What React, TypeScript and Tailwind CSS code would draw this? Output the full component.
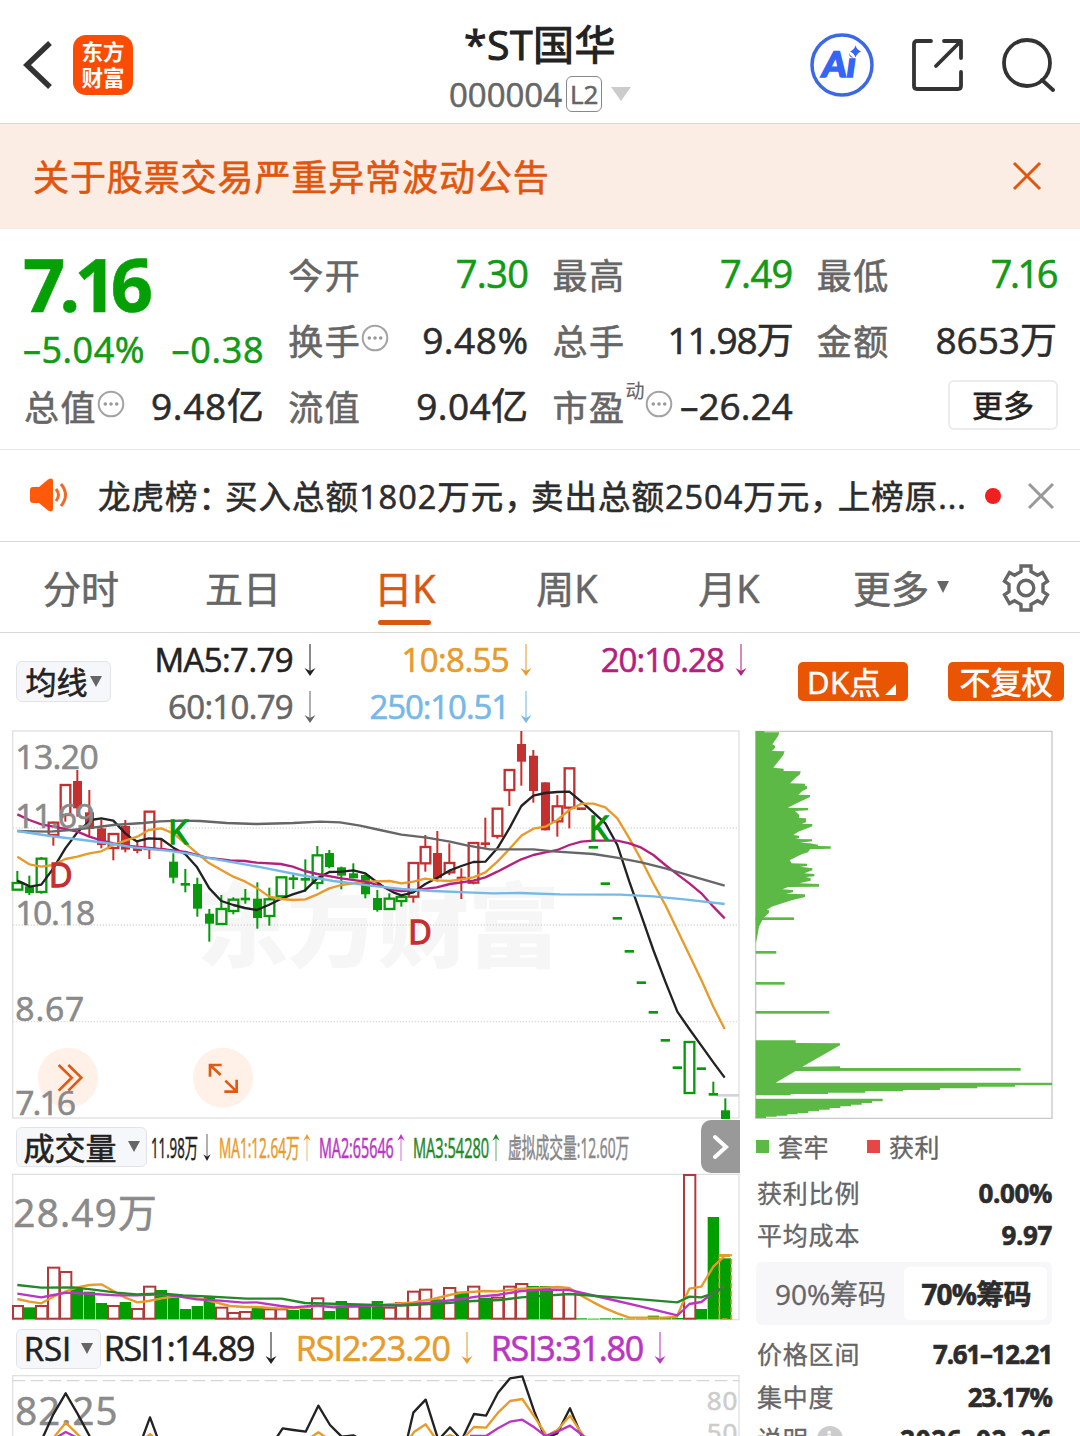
import React from "react";

type Pt = [number, number];
type Kind = "solid" | "hollow" | "dash";
type Candle = ["r" | "g", Kind, number, number, number, number];

const RED = "#c4302f";
const GREEN = "#079a0b";

// color, kind, body top, body bottom, wick top, wick bottom
const candles: Candle[] = [
  ["g", "hollow", 474, 494, 438, 474], ["g", "solid", 484, 504, 452, 510], ["g", "hollow", 401, 501, 396, 506],
  ["r", "hollow", 293, 330, 290, 362], ["r", "hollow", 180, 270, 180, 290], ["r", "solid", 168, 250, 135, 275],
  ["r", "solid", 262, 312, 195, 335], ["r", "solid", 310, 360, 285, 370], ["r", "hollow", 327, 369, 327, 406],
  ["r", "solid", 303, 374, 285, 382], ["r", "solid", 366, 378, 350, 385], ["r", "hollow", 260, 372, 260, 402],
  ["r", "solid", 370, 378, 345, 378], ["g", "solid", 410, 458, 385, 475], ["g", "dash", 478, 0, 432, 502],
  ["g", "solid", 477, 551, 458, 575], ["g", "solid", 566, 596, 552, 650], ["g", "hollow", 552, 597, 510, 597],
  ["g", "hollow", 524, 558, 517, 568], ["g", "dash", 522, 0, 492, 536], ["g", "solid", 521, 579, 472, 611],
  ["g", "hollow", 523, 573, 488, 602], ["g", "hollow", 457, 514, 457, 457], ["g", "dash", 461, 0, 448, 492],
  ["g", "dash", 463, 0, 403, 500], ["g", "hollow", 391, 474, 363, 493], ["g", "solid", 384, 426, 375, 430],
  ["g", "solid", 427, 452, 425, 493], ["g", "solid", 445, 460, 415, 460], ["g", "solid", 450, 508, 448, 520],
  ["g", "solid", 519, 555, 495, 560], ["g", "hollow", 521, 552, 505, 552], ["g", "hollow", 516, 528, 510, 545],
  ["r", "hollow", 414, 515, 414, 533], ["r", "hollow", 366, 415, 330, 440], ["r", "solid", 384, 460, 318, 470],
  ["r", "hollow", 414, 442, 355, 450], ["r", "dash", 459, 0, 430, 522], ["r", "hollow", 354, 473, 354, 478],
  ["r", "dash", 356, 0, 278, 368], ["r", "hollow", 251, 333, 251, 341], ["r", "hollow", 135, 195, 135, 243],
  ["r", "solid", 57, 110, 18, 182], ["r", "solid", 92, 198, 75, 233], ["r", "solid", 172, 316, 172, 316],
  ["r", "hollow", 244, 289, 210, 335], ["r", "hollow", 130, 248, 130, 310], ["r", "dash", 251, 0, 251, 251],
  ["g", "dash", 367, 0, 367, 367], ["g", "dash", 476, 0, 476, 476], ["g", "dash", 580, 0, 580, 580],
  ["g", "dash", 679, 0, 679, 679], ["g", "dash", 773, 0, 773, 773], ["g", "dash", 862, 0, 862, 862],
  ["g", "dash", 946, 0, 946, 946], ["g", "dash", 1028, 0, 1028, 1028], ["g", "hollow", 951, 1104, 951, 951],
  ["g", "dash", 1031, 0, 1031, 1031], ["g", "dash", 1108, 0, 1070, 1108], ["g", "solid", 1156, 1182, 1120, 1182],
];

const ma5 = "52,467 72,476 90,485 124,479 160,430 196,370 232,322 272,285 304,280 340,287 376,325 395,340 410,349 446,340 484,342 520,368 556,388 590,425 628,490 664,528 700,540 735,549 770,555 806,540 842,522 878,508 914,497 952,460 988,441 1024,440 1060,436 1096,445 1122,465 1150,485 1180,502 1204,511 1240,502 1276,477 1312,458 1348,437 1384,423 1420,411 1456,410 1492,370 1528,310 1564,243 1600,212 1636,204 1672,201 1708,200 1744,230 1780,262 1816,295 1852,360 1888,470 1924,572 1960,675 1996,770 2032,860 2068,912 2104,962 2140,1012 2174,1058";
const ma10 = "52,395 88,418 124,425 160,420 196,402 232,395 268,385 304,379 340,360 376,347 412,335 446,315 484,310 520,325 556,355 592,385 628,415 664,435 700,455 736,470 772,490 808,515 844,522 880,525 916,523 952,508 988,490 1024,480 1060,475 1096,470 1170,468 1204,475 1240,470 1276,461 1312,466 1348,468 1384,463 1420,457 1456,442 1492,410 1528,372 1564,332 1600,311 1636,305 1672,285 1708,255 1744,236 1780,236 1816,247 1852,280 1888,340 1924,405 1960,475 1996,540 2032,615 2068,690 2104,765 2140,845 2174,912";
const ma20 = "52,268 88,285 124,298 160,305 196,312 232,320 268,335 304,346 340,355 376,362 440,368 500,374 556,381 620,398 690,406 735,408 770,413 842,417 878,425 914,438 952,447 1024,460 1096,470 1140,482 1180,495 1204,498 1240,496 1310,487 1350,477 1420,467 1456,457 1492,440 1564,403 1600,390 1636,382 1672,375 1708,360 1744,350 1780,347 1852,347 1888,355 1924,368 1960,390 1996,420 2032,448 2068,475 2104,505 2140,545 2174,580";
const ma60 = "52,318 100,319 150,320 200,316 260,310 340,300 430,294 480,289 540,287 600,288 680,294 770,297 880,294 960,290 1020,292 1080,302 1140,315 1204,329 1280,338 1350,350 1400,361 1470,373 1600,373 1660,379 1780,387 1850,398 1924,412 1996,430 2080,455 2174,482";
const ma250 = "52,318 150,333 250,345 340,357 400,367 500,377 560,385 620,398 700,412 800,430 900,450 1000,468 1060,475 1110,482 1204,492 1300,498 1400,502 1480,505 1560,504 1680,508 1860,509 1960,514 2060,524 2174,537";

// color and bar top, one entry a trading day
const volumes: ["r" | "g", number][] = [
  ["r", 573], ["g", 577], ["r", 573], ["r", 458], ["r", 471], ["g", 520], ["g", 530], ["g", 564], ["r", 573], ["g", 561],
  ["r", 582], ["r", 515], ["g", 525], ["g", 548], ["g", 582], ["g", 573], ["g", 543], ["r", 578], ["r", 594], ["r", 591],
  ["g", 575], ["r", 583], ["r", 583], ["g", 585], ["g", 582], ["r", 550], ["g", 588], ["g", 558], ["r", 575], ["g", 575],
  ["g", 558], ["r", 578], ["r", 564], ["r", 530], ["r", 524], ["g", 553], ["r", 519], ["g", 530], ["r", 515], ["g", 548],
  ["r", 548], ["r", 515], ["r", 507], ["g", 513], ["g", 513], ["r", 525], ["r", 537], ["g", 610], ["g", 611], ["g", 610],
  ["g", 610], ["g", 611], ["g", 611], ["g", 602], ["g", 608], ["g", 609], ["r", 180], ["g", 582], ["g", 306], ["g", 430],
];

const vma1 = "52,552 88,560 124,565 160,545 200,528 232,517 268,510 304,508 340,528 376,548 412,562 446,558 484,550 520,545 560,545 620,555 690,573 735,576 770,576 842,581 914,578 952,573 1024,574 1110,572 1240,562 1300,552 1348,540 1384,533 1456,528 1492,529 1564,521 1636,518 1672,516 1708,519 1744,542 1780,562 1816,580 1852,595 1888,608 1990,608 2030,606 2050,560 2068,521 2104,515 2140,455 2174,423 2190,421";
const vma2 = "52,536 124,547 160,540 200,533 280,537 350,541 410,541 484,538 540,545 590,553 660,557 730,563 770,562 842,573 880,577 950,571 1000,577 1060,573 1204,570 1300,562 1384,552 1430,545 1492,540 1564,528 1636,524 1708,525 1852,558 1924,575 2032,601 2050,585 2068,567 2104,561 2140,533 2174,515";
const vma3 = "52,510 124,518 220,517 280,524 350,533 410,538 484,535 550,541 620,544 740,551 845,551 915,564 1024,567 1204,572 1330,565 1420,558 1500,555 1564,547 1708,537 1888,550 1960,556 2032,562 2068,545 2104,547 2140,535 2174,517";

const chipProfile: Pt[] = [
  [32, 18], [58, 18], [58, 22], [103, 22], [100, 32], [82, 58], [90, 62], [90, 68], [81, 78], [119, 79], [115, 90], [85, 128],
  [116, 131], [116, 138], [167, 139], [165, 148], [150, 160], [135, 175], [180, 176], [180, 183], [186, 184], [186, 191], [172, 198],
  [160, 209], [195, 210], [195, 216], [155, 235], [128, 248], [189, 249], [189, 256], [150, 258], [163, 270], [163, 279], [183, 280],
  [183, 292], [170, 296], [202, 297], [202, 304], [160, 320], [145, 330], [162, 332], [162, 340], [150, 342], [201, 343], [201, 349],
  [165, 353], [195, 355], [219, 359], [219, 363], [257, 364], [257, 371], [195, 373], [189, 382], [170, 388], [134, 406], [140, 415],
  [186, 416], [186, 423], [165, 425], [190, 428], [202, 430], [202, 436], [178, 445], [208, 447], [208, 454], [183, 456], [197, 460],
  [197, 467], [163, 475], [222, 477], [222, 485], [130, 486], [112, 493], [144, 495], [144, 502], [123, 506], [180, 508], [180, 516],
  [140, 526], [112, 535], [80, 545], [65, 555], [72, 556], [72, 563], [55, 580], [42, 605], [36, 640], [32, 655],
];
const chipLower: Pt[] = [
  [32, 946], [152, 946], [152, 954], [285, 955], [285, 961], [172, 1025], [285, 1024], [285, 1029], [827, 1029], [827, 1037],
  [152, 1038], [92, 1073], [921, 1073], [921, 1081], [810, 1081], [810, 1085], [697, 1085], [697, 1090], [585, 1090], [585, 1095],
  [474, 1095], [474, 1099], [361, 1099], [361, 1103], [249, 1103], [249, 1107], [137, 1107], [137, 1111], [32, 1111],
];
const chipBase: Pt[] = [
  [32, 1121], [413, 1121], [413, 1129], [381, 1129], [381, 1134], [350, 1134], [350, 1139], [318, 1139], [318, 1144], [286, 1144],
  [286, 1149], [254, 1149], [254, 1154], [222, 1154], [222, 1159], [190, 1159], [190, 1164], [158, 1164], [158, 1168], [127, 1168],
  [127, 1172], [95, 1172], [95, 1175], [63, 1175], [63, 1179], [32, 1179],
];
const chipSpikes = [[577, 147], [678, 94], [771, 119], [858, 253]];

const toPoints = (pts: Pt[]) => pts.map((p) => p.join(",")).join(" ");

function Line({ points, color, w = 7 }: { points: string; color: string; w?: number }) {
  return <polyline points={points} fill="none" stroke={color} strokeWidth={w} strokeLinejoin="round" />;
}

function AxisText({ x, y, w, size, children, fill = "#8a8a8a" }: { x: number; y: number; w: number; size: number; children: string; fill?: string }) {
  return (
    <text x={x} y={y} textLength={w} fontSize={size} fill={fill} stroke={fill} strokeWidth={2} lengthAdjust="spacing">
      {children}
    </text>
  );
}

function CandleMark({ c, i }: { c: Candle; i: number }) {
  const [tone, kind, top, bottom, wTop, wBottom] = c;
  const x = 52 + 36 * i;
  const color = tone === "r" ? RED : GREEN;
  if (kind === "dash")
    return (
      <g fill={color}>
        <rect x={x - 14} y={top - 4} width={28} height={8} />
        {wBottom > wTop && <rect x={x - 3} y={wTop} width={6} height={wBottom - wTop} />}
      </g>
    );
  if (kind === "solid")
    return (
      <g fill={color}>
        <rect x={x - 13} y={top} width={27} height={bottom - top} />
        <rect x={x - 3} y={wTop} width={6} height={wBottom - wTop} />
      </g>
    );
  return (
    <g fill={color}>
      <rect x={x - 14} y={top} width={29} height={bottom - top} fill="none" stroke={color} strokeWidth={7} />
      {top > wTop && <rect x={x - 3} y={wTop} width={6} height={top - wTop} />}
      {wBottom > bottom && <rect x={x - 3} y={bottom} width={6} height={wBottom - bottom} />}
    </g>
  );
}

function Signal({ x, y, color, children }: { x: number; y: number; color: string; children: string }) {
  return <text x={x} y={y} fontSize={97} fill={color} stroke={color} strokeWidth={4}>{children}</text>;
}

function PriceChart() {
  return (
    <svg viewBox="0 15 2220 1170" className="block h-[390px] w-[740px]">
      <text x={590} y={706} fontSize={276} textLength={1090} fill="#f6f6f6" className="font-black">东方财富</text>
      {[309, 600, 890].map((y) => (
        <line key={y} x1={38} x2={2216} y1={y} y2={y} stroke="#dcdcdc" strokeWidth={4} strokeDasharray="4 5" />
      ))}
      <rect x={38} y={18} width={2179} height={1161} fill="none" stroke="#e0e0e0" strokeWidth={4} />
      <line x1={2150} x2={2217} y1={1111} y2={1111} stroke="#d3d4da" strokeWidth={8} />
      <circle cx={204} cy={1058} r={90} fill="#fff0e8" />
      <circle cx={669} cy={1058} r={90} fill="#fff0e8" />
      <g fill="none" stroke="#e05a14" strokeWidth={8}>
        <path d="M176 1020l39 38-39 39M205 1020l39 38-39 39" />
        <path d="M630 1055v-35h35M630 1020l32 30M710 1064v36h-37M710 1100l-34-33" />
      </g>
      {candles.map((c, i) => <CandleMark key={i} c={c} i={i} />)}
      <Line points={ma5} color="#222" />
      <Line points={ma10} color="#e79b2a" />
      <Line points={ma20} color="#b4207e" />
      <Line points={ma60} color="#666" />
      <Line points={ma250} color="#76b8e6" />
      <AxisText x={46} y={131} w={250} size={101}>13.20</AxisText>
      <AxisText x={46} y={308} w={238} size={101}>11.69</AxisText>
      <AxisText x={46} y={600} w={240} size={101}>10.18</AxisText>
      <AxisText x={46} y={889} w={207} size={101}>8.67</AxisText>
      <AxisText x={46} y={1169} w={182} size={101}>7.16</AxisText>
      <Signal x={505} y={356} color={GREEN}>K</Signal>
      <Signal x={147} y={486} color={RED}>D</Signal>
      <Signal x={1225} y={656} color={RED}>D</Signal>
      <Signal x={1766} y={346} color={GREEN}>K</Signal>
    </svg>
  );
}

function VolumeChart() {
  return (
    <svg viewBox="0 174 2220 444" className="block h-[148px] w-[740px]">
      <rect x={38} y={178} width={2179} height={436} fill="none" stroke="#e0e0e0" strokeWidth={4} />
      {volumes.map(([tone, top], i) => {
        const x = 52 + 36 * i;
        return tone === "r" ? (
          <rect key={i} x={i ? x - 16 : 39} y={top} width={i ? 34 : 30} height={611 - top} fill="#fff" stroke="#b03a3a" strokeWidth={6} />
        ) : (
          <rect key={i} x={x - 17} y={top} width={34} height={613 - top} fill="#009f00" />
        );
      })}
      <rect x={2158} y={420} width={36} height={192} fill="none" stroke="#e79b2a" strokeWidth={5} strokeDasharray="16 8" />
      <rect x={2156} y={417} width={34} height={9} fill="#e79b2a" />
      <Line points={vma1} color="#e79b2a" />
      <Line points={vma2} color="#bb35c4" />
      <Line points={vma3} color="#24882a" />
      <AxisText x={40} y={335} w={430} size={116}>28.49万</AxisText>
    </svg>
  );
}

function RsiChart() {
  return (
    <svg viewBox="0 777 2220 186" className="block h-[62px] w-[740px]">
      <rect x={38} y={782} width={2179} height={300} fill="none" stroke="#e0e0e0" strokeWidth={4} />
      <line x1={38} x2={2216} y1={797} y2={797} stroke="#ccc" strokeWidth={3} strokeDasharray="38 16" />
      <AxisText x={46} y={929} w={306} size={115}>82.25</AxisText>
      <AxisText x={2120} y={884} w={92} size={78} fill="#ccc">80</AxisText>
      <AxisText x={2120} y={981} w={92} size={78} fill="#ccc">50</AxisText>
      <Line points="125,975 160,898 197,835 232,895 275,975" color="#222" />
      <Line points="425,975 450,907 475,975" color="#222" />
      <Line points="825,975 848,940 880,945 917,950 955,872 990,930 1025,965 1060,961 1085,975" color="#222" />
      <Line points="1222,970 1240,893 1277,854 1315,975 1350,937 1385,975 1422,897 1458,902 1494,833 1530,790 1567,784 1603,890 1636,970 1672,955 1710,880 1750,975" color="#222" />
      <Line points="155,975 197,923 240,965" color="#e79b2a" />
      <Line points="430,975 450,957 470,975" color="#e79b2a" />
      <Line points="925,972 955,952 985,972" color="#e79b2a" />
      <Line points="1225,975 1243,950 1277,928 1310,975 1350,960 1385,975 1422,936 1458,938 1494,893 1530,858 1567,852 1603,905 1640,962 1672,945 1710,902 1755,970" color="#e79b2a" />
      <Line points="165,970 197,951 235,970" color="#bb35c4" />
      <Line points="1410,963 1458,963 1494,940 1530,920 1567,914 1600,935 1636,963 1672,950 1710,932 1757,968" color="#bb35c4" />
    </svg>
  );
}

function ChipChart() {
  return (
    <svg viewBox="30 15 900 1170" className="block h-[390px] w-[300px]">
      <path d="M32 1180V19H921V1180Z" fill="none" stroke="#c8c8c8" strokeWidth={4} />
      <g fill="#5cb946">
        <polygon points={toPoints(chipProfile)} />
        <polygon points={toPoints(chipLower)} />
        <polygon points={toPoints(chipBase)} />
        {chipSpikes.map(([y, x]) => <rect key={y} x={32} y={y} width={x - 32} height={8} />)}
      </g>
    </svg>
  );
}

function Dots() {
  return (
    <svg viewBox="0 0 28 28" className="-mt-[6px] h-7 w-7 shrink-0">
      <circle cx="14" cy="14" r="12.3" fill="none" stroke="#a3a3a3" strokeWidth="2" />
      <g fill="#999"><circle cx="8.3" cy="14" r="1.800" /><circle cx="14" cy="14" r="1.800" /><circle cx="19.7" cy="14" r="1.800" /></g>
    </svg>
  );
}

function Arrow({ color, up = false, h = 32, w = 12 }: { color: string; up?: boolean; h?: number; w?: number }) {
  return (
    <svg viewBox="0 0 12 32" width={w} height={h} className={up ? "shrink-0 rotate-180" : "shrink-0"} preserveAspectRatio="none">
      <path d="M6 0V29" stroke={color} strokeWidth="1.4" opacity=".75" />
      <path d="M.5 24L6 27l5.500-3L6 32Z" fill={color} />
    </svg>
  );
}

function Metric({ label, value, green, dots, sup, tight = "tracking-normal" }: { label: string; value: string; green?: boolean; dots?: boolean; sup?: string; tight?: string }) {
  return (
    <div className="flex items-center whitespace-nowrap">
      <span className="text-[35px] tracking-[1.500px] text-[#666]">{label}</span>
      {sup && <span className="-mt-8 text-[19px] text-[#666] [-webkit-text-stroke-width:0.2px]">{sup}</span>}
      {dots && <Dots />}
      <span className={(green ? "-mt-1 ml-auto text-[38px] text-[#119a14] " : "-mt-1 ml-auto text-[37px] text-[#2c2c2c] ") + tight}>{value}</span>
    </div>
  );
}

function Indicator({ text, color, className }: { text: string; color: string; className: string }) {
  return (
    <div className={"flex items-center justify-end gap-[11px] whitespace-nowrap " + className} style={{ color }}>
      <span>{text}</span>
      <Arrow color={color} />
    </div>
  );
}

function Condensed({ text, color, w, up, scale }: { text: string; color: string; w: string; up?: boolean; scale: string }) {
  return (
    <div className={"flex items-center justify-between " + w} style={{ color }}>
      <span className="w-0 whitespace-nowrap"><span className={"inline-block origin-left text-[27px] " + scale}>{text}</span></span>
      {up !== undefined && <Arrow color={color} up={up} h={27} w={8} />}
    </div>
  );
}

function StatRow({ label, value, className, tight = "tracking-[-0.4px]" }: { label: React.ReactNode; value: string; className: string; tight?: string }) {
  return (
    <div className={"flex items-center justify-between whitespace-nowrap " + className}>
      <span className="flex items-center gap-3 pl-[2px] text-[25px] tracking-[0.8px] text-[#666] [-webkit-text-stroke-width:0.35px]">{label}</span>
      <span className={"-mt-px text-[26px] font-bold text-[#2c2c2c] " + tight}>{value}</span>
    </div>
  );
}

export default function App() {
  return (
    <div className="h-[1436px] w-[1080px] overflow-hidden bg-white font-['Open_Sans','Noto_Sans_CJK_SC',sans-serif] leading-none text-[#222] [-webkit-text-stroke-width:0.6px]">
      <header className="grid h-[124px] grid-cols-[1fr_auto_1fr] items-center border-b border-[#d9d9d9]">
        <div className="flex items-center pt-[6px] pl-[22px]">
          <svg viewBox="0 0 32 52" className="h-[52px] w-8"><path d="M28 4L5 26l23 22" fill="none" stroke="#333" strokeWidth="5.500" /></svg>
          <div className="ml-[19px] grid h-[60px] w-[60px] content-center rounded-[13px] bg-[#fb4c05] text-center text-[21.5px] leading-[26px] font-bold text-white [-webkit-text-stroke-width:0px]">
            <span>东方</span><span>财富</span>
          </div>
        </div>
        <div className="flex flex-col items-center">
          <div className="mt-[12px] text-[41px] leading-[50px] tracking-[0.5px] [-webkit-text-stroke-width:1px]">*ST国华</div>
          <div className="mt-[3px] flex h-[44px] items-center text-[33px] text-[#666]">
            <span>000004</span>
            <span className="ml-1 grid h-9 w-9 place-items-center rounded-md border border-[#888] text-[26px]">L2</span>
            <svg viewBox="0 0 20 14" className="ml-[9px] h-[14px] w-5"><path d="M0 0h20L10 14Z" fill="#ccc" /></svg>
          </div>
        </div>
        <div className="flex items-center justify-end gap-9 pt-[6px] pr-[25px]">
          <svg viewBox="0 0 66 66" className="h-[66px] w-[66px] font-['Lato',sans-serif]">
            <circle cx="33" cy="33" r="30" fill="#fff" stroke="#3c68e6" strokeWidth="3.500" />
            <text x="18" y="45" fontSize="35" fill="#3465f5" stroke="#3465f5" strokeWidth="1.500" transform="skewX(-8)" className="font-black">Ai</text>
            <circle cx="47" cy="19" r="7" fill="#fff" />
            <path d="M46.500 13.500q1.500 4.500 5.500 6-4 1.500-5.500 6-1.500-4.500-5.500-6 4-1.500 5.500-6Z" fill="#3465f5" />
          </svg>
          <svg viewBox="0 0 54 54" className="h-[54px] w-[54px]" fill="none" stroke="#333" strokeWidth="3.800" strokeLinecap="round" strokeLinejoin="round">
            <path d="M20 3H6Q3 3 3 6v42q0 3 3 3h41q3 0 3-3V34M50 20V3H33M50 3L25 28" />
          </svg>
          <svg viewBox="0 0 54 54" className="h-[54px] w-[54px]" fill="none" stroke="#333" strokeWidth="3.800" strokeLinecap="round">
            <circle cx="26" cy="25" r="23" /><path d="M41 42L52 52" />
          </svg>
        </div>
      </header>

      <div className="flex h-[105px] items-center justify-between bg-[#fcede4] pr-[38px] pl-[33px]">
        <span className="mt-[3px] text-[36px] tracking-[0.9px] text-[#e0560e]">关于股票交易严重异常波动公告</span>
        <svg viewBox="0 0 30 30" className="-mt-[2px] h-[30px] w-[30px]"><path d="M2 2l26 26M28 2L2 28" stroke="#e0560e" strokeWidth="3" /></svg>
      </div>

      <section className="grid h-[221px] grid-cols-4 grid-rows-[66px_66px_66px] gap-x-6 border-b border-[#e8e8e8] pt-[13px] pr-[23px] pl-6">
        <div className="row-span-2 flex flex-col">
          <span className="mt-[4px] -ml-px text-[74px] leading-[76px] font-bold tracking-[-6px] text-[#05a005]">7.16</span>
          <span className="mt-[9px] flex justify-between text-[36px] leading-[38px] text-[#119a14]"><span className="-ml-px tracking-[0.5px]">–5.04%</span><span className="tracking-[0.7px]">–0.38</span></span>
        </div>
        <Metric label="今开" value="7.30" green tight="tracking-[-0.6px]" />
        <Metric label="最高" value="7.49" green tight="tracking-[-0.6px]" />
        <Metric label="最低" value="7.16" green tight="tracking-[-2.500px] pr-px" />
        <Metric label="换手" value="9.48%" dots tight="tracking-[0.5px]" />
        <Metric label="总手" value="11.98万" tight="tracking-[-1px]" />
        <Metric label="金额" value="8653万" />
        <Metric label="总值" value="9.48亿" dots tight="tracking-[0.6px]" />
        <Metric label="流值" value="9.04亿" tight="tracking-[0.4px]" />
        <Metric label="市盈" sup="动" value="–26.24" dots />
        <div className="-mt-[4px] -mr-px flex items-center justify-end">
          <span className="grid h-[50px] w-[110px] place-items-center rounded-md border-2 border-[#ececec] pt-px text-[31px] text-[#222]">更多</span>
        </div>
      </section>

      <section className="flex h-[92px] items-center border-b border-[#d9d9d9] pl-[29px] whitespace-nowrap">
        <svg viewBox="0 0 40 34" className="-mt-[2px] h-[34px] w-10">
          <path d="M1 12q0-3 3-3h6L19 1.500Q24-1 24 3v28q0 4-5 1.500L10 25H4q-3 0-3-3Z" fill="#ff5a0a" />
          <path d="M27 11q5 6 0 12M32 6q9 11 0 22" fill="none" stroke="#ee6a2a" strokeWidth="3" />
        </svg>
        <span className="mt-[3px] ml-[29px] w-[870px] text-[32.500px] tracking-[1px] text-[#2c2c2c]">龙虎榜<span className="tracking-[-6px]">：</span>买入总额1802万元<span className="tracking-[-6px]">，</span>卖出总额2504万元<span className="tracking-[-5px]">，</span>上榜原...</span>
        <span className="ml-[17px] h-4 w-4 rounded-full bg-[#f02020]" />
        <svg viewBox="0 0 26 26" className="ml-[27px] h-[26px] w-[26px]"><path d="M1 1l24 24M25 1L1 25" stroke="#999" strokeWidth="3" /></svg>
      </section>

      <nav className="flex h-[91px] items-center border-b border-[#d9d9d9] pt-px text-[38px] text-[#666]">
        <span className="w-[162px] text-center">分时</span>
        <span className="w-[162px] text-center">五日</span>
        <span className="relative w-[162px] text-center text-[#d9580f]">日K<i className="absolute -bottom-[18px] left-[54px] h-[5px] w-[53px] rounded-full bg-[#d9580f]" /></span>
        <span className="w-[162px] text-center">周K</span>
        <span className="w-[162px] text-center">月K</span>
        <span className="flex w-[182px] items-center justify-center gap-2">更多<svg viewBox="0 0 12 12" className="-mt-[2px] h-3 w-3"><path d="M0 0h12L6 12Z" fill="#666" /></svg></span>
        <svg viewBox="0 0 48 48" className="ml-[10px] h-12 w-12" fill="none" stroke="#666" strokeWidth="3.400">
          <path d="M19 2h10v5.500l6.500 3.700 5-2.700 5 8.700L41 20.300v7.400l4.500 3.100-5 8.700-5-2.700L29 40.500V46H19v-5.500l-6.500-3.700-5 2.700-5-8.700L7 27.700v-7.400l-4.500-3.100 5-8.700 5 2.700L19 7.500Z" />
          <circle cx="24" cy="24" r="7.800" />
        </svg>
      </nav>

      <section className="flex h-[97px] items-center">
        <span className="ml-4 flex h-[41px] w-[95px] items-center justify-center gap-[2px] rounded-md border border-[#e2e4e8] bg-[#f6f7fb] pt-[2px] text-[31px]">均线
          <svg viewBox="0 0 12 11" className="-mt-[3px] h-[11px] w-3"><path d="M0 0h12L6 11Z" fill="#666" /></svg>
        </span>
        <div className="mt-[3px] grid h-[94px] w-[636px] grid-cols-[205px_216px_215px] grid-rows-2 items-center text-[33px]">
          <Indicator text="MA5:7.79" color="#222222" className="tracking-[-0.6px]" />
          <Indicator text="10:8.55" color="#e79b2a" className="tracking-[-0.6px]" />
          <Indicator text="20:10.28" color="#b4207e" className="tracking-[-0.9px]" />
          <Indicator text="60:10.79" color="#666666" className="tracking-[-0.7px]" />
          <Indicator text="250:10.51" color="#76b8e6" className="tracking-[-1.100px]" />
        </div>
        <span className="ml-[51px] flex h-[39px] w-[110px] items-center rounded-[5px] bg-[#ea5504] pl-[9px] text-[31px] whitespace-nowrap text-white"><span className="pt-px tracking-[0.5px]">DK点</span>
          <svg viewBox="0 0 11 11" className="mt-4 ml-[4px] h-[11px] w-[11px]"><path d="M11 0V11H0Z" fill="#fff" /></svg>
        </span>
        <span className="ml-10 grid h-[39px] w-[116px] place-items-center rounded-[5px] bg-[#ea5504] pt-[2px] text-[31px] text-white">不复权</span>
      </section>

      <div className="flex">
        <div className="w-[740px]">
          <PriceChart />
          <div className="flex h-[53px] items-center whitespace-nowrap">
            <span className="ml-4 flex h-10 w-[131px] items-center justify-center gap-[11px] rounded-md border border-[#e2e4e8] bg-[#f6f7fb] pt-[3px] text-[31px]">成交量
              <svg viewBox="0 0 12 11" className="-mt-[3px] h-[11px] w-3"><path d="M0 0h12L6 11Z" fill="#666" /></svg>
            </span>
            <div className="mt-px ml-1 flex w-[550px] items-center gap-2">
              <Condensed text="11.98万" color="#222222" w="w-[60px]" up={false} scale="scale-x-[0.490]" />
              <Condensed text="MA1:12.64万" color="#e79b2a" w="w-[92px]" up scale="scale-x-[0.505]" />
              <Condensed text="MA2:65646" color="#bb35c4" w="w-[86px]" up scale="scale-x-[0.530]" />
              <Condensed text="MA3:54280" color="#24882a" w="w-[87px]" up scale="scale-x-[0.540]" />
              <Condensed text="虚拟成交量:12.60万" color="#888888" w="w-[124px]" scale="scale-x-[0.510]" />
            </div>
            <span className="grid h-[53px] w-[39px] place-items-center rounded-l-[10px] bg-[#999]">
              <svg viewBox="0 0 16 26" className="h-[26px] w-4"><path d="M2 3l11 10L2 23" fill="none" stroke="#fff" strokeWidth="4" strokeLinecap="round" /></svg>
            </span>
          </div>
          <VolumeChart />
          <div className="flex h-[53px] items-center whitespace-nowrap">
            <span className="mt-[2px] ml-4 flex h-10 w-[85px] items-center justify-center gap-[10px] rounded-md border border-[#e2e4e8] bg-[#f6f7fb] text-[33px]">RSI
              <svg viewBox="0 0 12 11" className="h-[11px] w-3"><path d="M0 0h12L6 11Z" fill="#666" /></svg>
            </span>
            <Indicator text="RSI1:14.89" color="#222222" className="w-[176px] text-[34px] tracking-[-1.400px]" />
            <Indicator text="RSI2:23.20" color="#e79b2a" className="w-[196px] text-[34px] tracking-[-1px]" />
            <Indicator text="RSI3:31.80" color="#bb35c4" className="w-[193px] text-[34px] tracking-[-1.200px]" />
          </div>
          <RsiChart />
        </div>

        <aside className="ml-[15px] w-[300px]">
          <ChipChart />
          <div className="pr-[3px]">
            <div className="flex h-[54px] items-center text-[25px] tracking-[0.5px] text-[#666] [-webkit-text-stroke-width:0.35px]">
              <i className="mt-[-2px] ml-px h-[13px] w-[13px] bg-[#5cb946]" /><span className="ml-[9px] pt-px">套牢</span>
              <i className="mt-[-2px] ml-[38px] h-[13px] w-[13px] bg-[#e64646]" /><span className="ml-[9px] pt-px">获利</span>
            </div>
            <StatRow label="获利比例" value="0.00%" className="-mt-[2px] h-[42px]" />
            <StatRow label="平均成本" value="9.97" className="h-[42px]" />
            <div className="mt-[6px] ml-px flex h-[63px] items-center rounded-md bg-[#f7f7fa] p-[5px] text-[28px] whitespace-nowrap">
              <span className="w-[139px] text-center text-[#666] [-webkit-text-stroke-width:0.35px]">90%筹码</span>
              <span className="ml-1 grid h-[53px] flex-1 place-items-center rounded-md bg-white pl-px font-bold tracking-[-0.8px] text-[#2c2c2c]">70%筹码</span>
            </div>
            <StatRow label="价格区间" value="7.61–12.21" className="mt-[8px] h-[43px]" tight="tracking-[-1.300px]" />
            <StatRow label="集中度" value="23.17%" className="h-[43px]" tight="tracking-[-1px]" />
            <StatRow label={<>说明<i className="-ml-1 grid h-[26px] w-[26px] place-items-center rounded-full bg-[#ccc] text-[19px] font-bold text-white not-italic">i</i></>} value="2026–02–26" className="h-[40px]" tight="tracking-[0.7px]" />
          </div>
        </aside>
      </div>
    </div>
  );
}
